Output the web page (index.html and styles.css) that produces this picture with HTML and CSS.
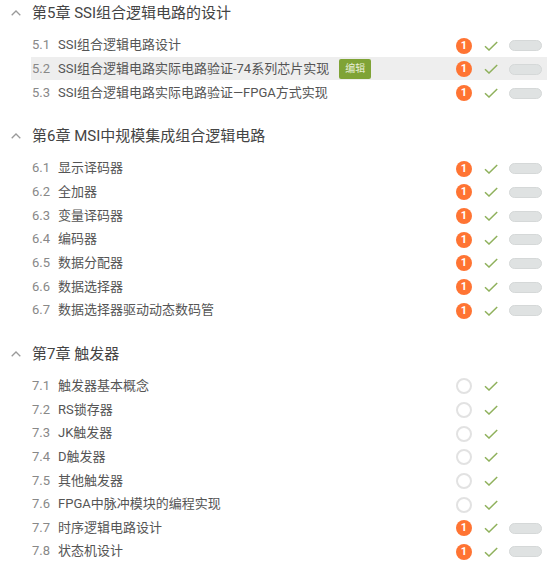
FILE: index.html
```html
<!DOCTYPE html>
<html lang="zh-CN">
<head>
<meta charset="UTF-8">
<meta name="viewport" content="width=device-width, initial-scale=1.0">
<title>课程目录</title>
<link rel="stylesheet" href="styles.css">
</head>
<body>

<svg class="sprite" aria-hidden="true">
    <symbol id="check" viewBox="0 0 14 10"><path d="M1 5.2 L5 9 L13.2 1" fill="none" stroke="#8fb15c" stroke-width="1.5"/></symbol>
    <symbol id="up" viewBox="0 0 10 6"><path d="M.7 5.3 L5 1 L9.3 5.3" fill="none" stroke="#9a9a9a" stroke-width="1.3"/></symbol>
</svg>

<div class="catalog">

    <section class="chapter">
        <h2 class="chapter-title"><svg class="arrow"><use href="#up"/></svg><span class="chapter-name">第5章 SSI组合逻辑电路的设计</span></h2>
        <div class="lesson"><span class="num">5.1</span><span class="name">SSI组合逻辑电路设计</span>
            <div class="status"><i class="badge">1</i><svg class="check"><use href="#check"/></svg><i class="pill"></i></div></div>
        <div class="lesson active"><span class="num">5.2</span><span class="name">SSI组合逻辑电路实际电路验证-74系列芯片实现</span><span class="tag">编辑</span>
            <div class="status"><i class="badge">1</i><svg class="check"><use href="#check"/></svg><i class="pill"></i></div></div>
        <div class="lesson"><span class="num">5.3</span><span class="name">SSI组合逻辑电路实际电路验证—FPGA方式实现</span>
            <div class="status"><i class="badge">1</i><svg class="check"><use href="#check"/></svg><i class="pill"></i></div></div>
    </section>

    <section class="chapter">
        <h2 class="chapter-title"><svg class="arrow"><use href="#up"/></svg><span class="chapter-name">第6章 MSI中规模集成组合逻辑电路</span></h2>
        <div class="lesson"><span class="num">6.1</span><span class="name">显示译码器</span>
            <div class="status"><i class="badge">1</i><svg class="check"><use href="#check"/></svg><i class="pill"></i></div></div>
        <div class="lesson"><span class="num">6.2</span><span class="name">全加器</span>
            <div class="status"><i class="badge">1</i><svg class="check"><use href="#check"/></svg><i class="pill"></i></div></div>
        <div class="lesson"><span class="num">6.3</span><span class="name">变量译码器</span>
            <div class="status"><i class="badge">1</i><svg class="check"><use href="#check"/></svg><i class="pill"></i></div></div>
        <div class="lesson"><span class="num">6.4</span><span class="name">编码器</span>
            <div class="status"><i class="badge">1</i><svg class="check"><use href="#check"/></svg><i class="pill"></i></div></div>
        <div class="lesson"><span class="num">6.5</span><span class="name">数据分配器</span>
            <div class="status"><i class="badge">1</i><svg class="check"><use href="#check"/></svg><i class="pill"></i></div></div>
        <div class="lesson"><span class="num">6.6</span><span class="name">数据选择器</span>
            <div class="status"><i class="badge">1</i><svg class="check"><use href="#check"/></svg><i class="pill"></i></div></div>
        <div class="lesson"><span class="num">6.7</span><span class="name">数据选择器驱动动态数码管</span>
            <div class="status"><i class="badge">1</i><svg class="check"><use href="#check"/></svg><i class="pill"></i></div></div>
    </section>

    <section class="chapter">
        <h2 class="chapter-title"><svg class="arrow"><use href="#up"/></svg><span class="chapter-name">第7章 触发器</span></h2>
        <div class="lesson"><span class="num">7.1</span><span class="name">触发器基本概念</span>
            <div class="status"><i class="ring"></i><svg class="check"><use href="#check"/></svg></div></div>
        <div class="lesson"><span class="num">7.2</span><span class="name">RS锁存器</span>
            <div class="status"><i class="ring"></i><svg class="check"><use href="#check"/></svg></div></div>
        <div class="lesson"><span class="num">7.3</span><span class="name">JK触发器</span>
            <div class="status"><i class="ring"></i><svg class="check"><use href="#check"/></svg></div></div>
        <div class="lesson"><span class="num">7.4</span><span class="name">D触发器</span>
            <div class="status"><i class="ring"></i><svg class="check"><use href="#check"/></svg></div></div>
        <div class="lesson"><span class="num">7.5</span><span class="name">其他触发器</span>
            <div class="status"><i class="ring"></i><svg class="check"><use href="#check"/></svg></div></div>
        <div class="lesson"><span class="num">7.6</span><span class="name">FPGA中脉冲模块的编程实现</span>
            <div class="status"><i class="ring"></i><svg class="check"><use href="#check"/></svg></div></div>
        <div class="lesson"><span class="num">7.7</span><span class="name">时序逻辑电路设计</span>
            <div class="status"><i class="badge">1</i><svg class="check"><use href="#check"/></svg><i class="pill"></i></div></div>
        <div class="lesson"><span class="num">7.8</span><span class="name">状态机设计</span>
            <div class="status"><i class="badge">1</i><svg class="check"><use href="#check"/></svg><i class="pill"></i></div></div>
    </section>

</div>

</body>
</html>
```

FILE: styles.css
```css
html, body {
    margin: 0;
    background: #fff;
    font-family: Roboto, "Noto Sans CJK SC", sans-serif;
    overflow: hidden;
}
.sprite {
    display: none;
}
.catalog {
    width: 547px;
}
.chapter {
    margin-bottom: 19px;
}
.chapter-title {
    display: flex;
    align-items: center;
    height: 26px;
    margin: 0 0 7px 0;
    padding-left: 11px;
    font-size: 15px;
    font-weight: normal;
    color: #444;
    white-space: pre;
}
.chapter-name {
    margin-top: -3px;
}
.arrow {
    width: 10px;
    height: 6px;
    margin-right: 11px;
}
.lesson {
    display: flex;
    align-items: center;
    height: 23.67px;
    margin-left: 31px;
    padding: 0 5px 0 1px;
    font-size: 13px;
    color: #555;
}
.lesson.active {
    background: #eee;
}
.num {
    width: 26px;
    color: #888;
}
.name {
    margin-top: -2px;
}
.tag {
    margin: 1px 0 0 10px;
    width: 32px;
    height: 20px;
    line-height: 20px;
    text-align: center;
    font-size: 10px;
    color: #e8efd8;
    background: #7fa336;
    border-radius: 2px;
}
.status {
    display: grid;
    grid-template-columns: 17px 14px 33px;
    column-gap: 11px;
    align-items: center;
    margin: 2px 0 0 auto;
}
.badge {
    display: block;
    width: 16px;
    height: 16px;
    line-height: 16px;
    border-radius: 50%;
    text-align: center;
    font-size: 11px;
    font-style: normal;
    font-weight: bold;
    color: #fff;
    background: #ff7433;
}
.ring {
    display: block;
    width: 16px;
    height: 16px;
    box-sizing: border-box;
    border: 2px solid #e2e2e2;
    border-radius: 50%;
}
.check {
    width: 14px;
    height: 10px;
}
.pill {
    display: block;
    height: 11px;
    box-sizing: border-box;
    background: #dfe2e2;
    border: 1px solid #d5d8d8;
    border-radius: 6px;
}
```
